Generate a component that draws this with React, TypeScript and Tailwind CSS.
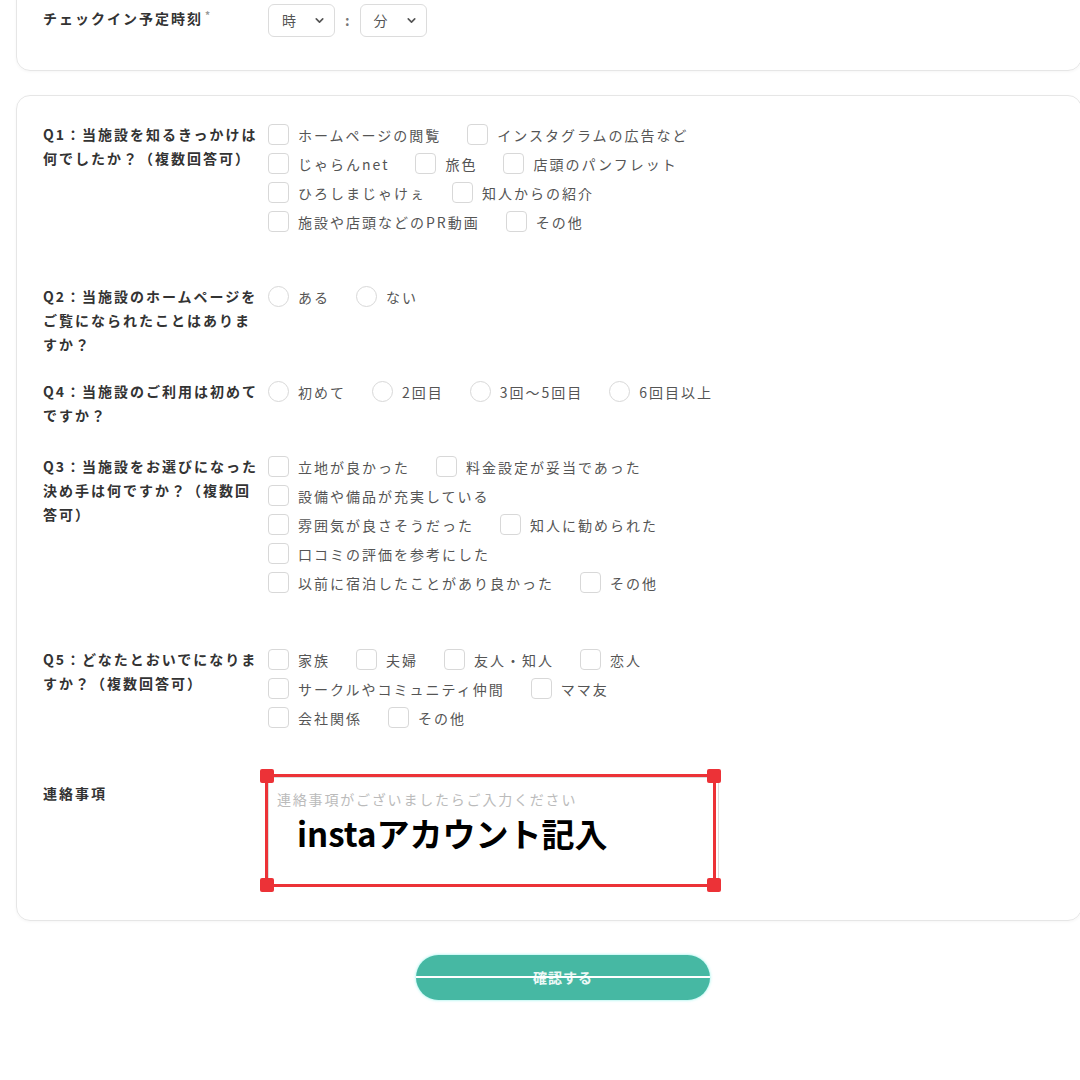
import React from 'react';
import { ChevronDown } from 'lucide-react';

const font = { fontFamily: '"Noto Sans CJK JP", "Noto Sans", sans-serif' };

function Check({ label, radio }: { label: string; radio?: boolean }) {
  return (
    <div className="flex items-center mr-[26px] h-[29px]">
      <span
        className={
          radio
            ? 'w-[21px] h-[21px] rounded-full border border-[#d8d8d8] bg-white shrink-0'
            : 'w-[21px] h-[21px] rounded-[4px] border border-[#d8d8d8] bg-white shrink-0'
        }
      />
      <span className="ml-[9px] text-[14px] tracking-[2px] text-[#555] whitespace-nowrap leading-none">{label}</span>
    </div>
  );
}

function Question({
  lines,
  rows,
  radio,
  className,
}: {
  lines: string[];
  rows: string[][];
  radio?: boolean;
  className?: string;
}) {
  return (
    <div className={'flex ' + (className ?? '')}>
      <div className="w-[225px] shrink-0 text-[14px] font-bold tracking-[2px] text-[#333] leading-[24px] whitespace-nowrap">
        {lines.map((l, i) => (
          <div key={i}>{l}</div>
        ))}
      </div>
      <div className="flex flex-col -mt-[2px]">
        {rows.map((r, i) => (
          <div key={i} className="flex">
            {r.map((o) => (
              <Check key={o} label={o} radio={radio} />
            ))}
          </div>
        ))}
      </div>
    </div>
  );
}

function Select({ label }: { label: string }) {
  return (
    <div className="w-[67px] h-[33px] border border-[#dcdcdc] rounded-[6px] flex items-center justify-between pl-[13px] pr-[8px] bg-white">
      <span className="text-[14px] text-[#555]">{label}</span>
      <ChevronDown size={13} strokeWidth={3} className="text-[#555]" />
    </div>
  );
}

export default function App() {
  return (
    <div className="w-[1080px] h-[1080px] bg-white overflow-hidden" style={font}>
      {/* check-in card */}
      <div className="ml-[16px] w-[1066px] -mt-[30px] h-[101px] border border-[#e6e6e6] rounded-[14px] shadow-[0_1px_3px_rgba(0,0,0,0.04)] pt-[33px] pl-[26px]">
        <div className="flex items-center">
          <div className="w-[225px] text-[14px] font-bold tracking-[2px] text-[#333] -mt-[5px]">
            チェックイン予定時刻<sup className="text-[#999] text-[10px] ml-[2px]">*</sup>
          </div>
          <Select label="時" />
          <span className="mx-[10px] text-[#777] text-[14px] font-bold">:</span>
          <Select label="分" />
        </div>
      </div>

      {/* questionnaire card */}
      <div className="ml-[16px] mt-[24px] w-[1066px] h-[826px] border border-[#e6e6e6] rounded-[14px] shadow-[0_1px_3px_rgba(0,0,0,0.04)] pt-[26px] pl-[26px]">
        <Question
          lines={['Q1：当施設を知るきっかけは', '何でしたか？（複数回答可）']}
          rows={[
            ['ホームページの閲覧', 'インスタグラムの広告など'],
            ['じゃらんnet', '旅色', '店頭のパンフレット'],
            ['ひろしまじゃけぇ', '知人からの紹介'],
            ['施設や店頭などのPR動画', 'その他'],
          ]}
        />
        <Question
          className="mt-[48px]"
          radio
          lines={['Q2：当施設のホームページを', 'ご覧になられたことはありま', 'すか？']}
          rows={[['ある', 'ない']]}
        />
        <Question
          className="mt-[23px]"
          radio
          lines={['Q4：当施設のご利用は初めて', 'ですか？']}
          rows={[['初めて', '2回目', '3回〜5回目', '6回目以上']]}
        />
        <Question
          className="mt-[27px]"
          lines={['Q3：当施設をお選びになった', '決め手は何ですか？（複数回', '答可）']}
          rows={[
            ['立地が良かった', '料金設定が妥当であった'],
            ['設備や備品が充実している'],
            ['雰囲気が良さそうだった', '知人に勧められた'],
            ['口コミの評価を参考にした'],
            ['以前に宿泊したことがあり良かった', 'その他'],
          ]}
        />
        <Question
          className="mt-[50px]"
          lines={['Q5：どなたとおいでになりま', 'すか？（複数回答可）']}
          rows={[
            ['家族', '夫婦', '友人・知人', '恋人'],
            ['サークルやコミュニティ仲間', 'ママ友'],
            ['会社関係', 'その他'],
          ]}
        />

        <div className="flex mt-[45px]">
          <div className="w-[225px] shrink-0 pt-[4px] text-[14px] font-bold tracking-[2px] text-[#333] leading-[24px]">
            連絡事項
          </div>
          <div className="relative">
            <textarea
              readOnly
              placeholder="連絡事項がございましたらご入力ください"
              className="block w-[451px] h-[109px] border border-[#ddd] rounded-[2px] pl-[8px] pt-[11px] text-[14px] tracking-[1.8px] resize-none placeholder:text-[#bbb] outline-none"
              style={font}
            />
            <div className="absolute left-[29px] top-[40px] text-[33px] font-bold text-black leading-none whitespace-nowrap">
              instaアカウント記入
            </div>
            {/* annotation frame */}
            <div className="absolute -left-[3px] -top-[3px] w-[451px] h-[113px] border-[3px] border-[#ec3237] pointer-events-none">
              <span className="absolute -left-[8px] -top-[8px] w-[14px] h-[14px] rounded-[2px] bg-[#ec3237]" />
              <span className="absolute -right-[8px] -top-[8px] w-[14px] h-[14px] rounded-[2px] bg-[#ec3237]" />
              <span className="absolute -left-[8px] -bottom-[8px] w-[14px] h-[14px] rounded-[2px] bg-[#ec3237]" />
              <span className="absolute -right-[8px] -bottom-[8px] w-[14px] h-[14px] rounded-[2px] bg-[#ec3237]" />
            </div>
          </div>
        </div>
      </div>

      {/* submit */}
      <div className="mt-[34px] ml-[416px] relative w-[294px] h-[45px] rounded-full bg-[#46b8a3] shadow-[0_0_3px_rgba(120,240,230,0.9)] flex items-center justify-center">
        <span className="text-[14px] font-bold tracking-[1px] text-white/90">確認する</span>
        <span className="absolute left-0 right-0 top-[21px] h-[2px] bg-white" />
      </div>
    </div>
  );
}
